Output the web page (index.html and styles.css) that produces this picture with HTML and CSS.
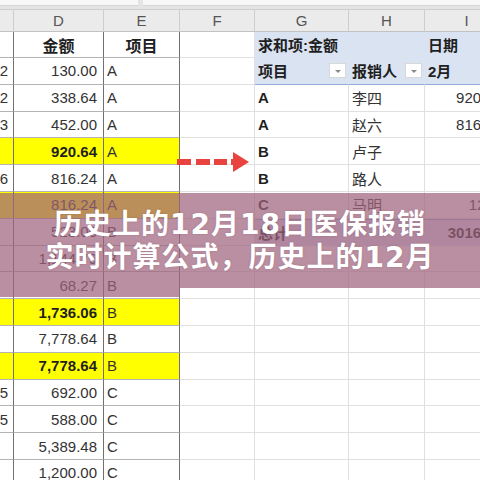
FILE: index.html
```html
<!DOCTYPE html>
<html lang="zh-CN">
<head>
<meta charset="utf-8">
<title>历史上的12月18日医保报销实时计算公式</title>
<link rel="stylesheet" href="styles.css">
</head>
<body>
<div class="sheet">
  <div class="topbar"><div class="namebox"></div><div class="fbar"></div></div>
  <div class="row hdr">
    <div class="c"></div><div class="c">D</div><div class="c">E</div><div class="c">F</div><div class="c">G</div><div class="c">H</div><div class="c">I</div>
  </div>
  <div class="row r1">
    <div class="c k"></div><div class="c t ctr b">金额</div><div class="c t ctr b">项目</div><div class="c"></div>
    <div class="c pv b">求和项:金额</div><div class="c pv"></div><div class="c pv b">日期</div>
  </div>
  <div class="row">
    <div class="c k">2</div><div class="c t num">130.00</div><div class="c t">A</div><div class="c"></div>
    <div class="c pv pvb b dd"><span>项目</span><span class="btn"></span></div><div class="c pv pvb b dd"><span>报销人</span><span class="btn"></span></div><div class="c pv pvb b">2月</div>
  </div>
  <div class="row">
    <div class="c k">2</div><div class="c t num">338.64</div><div class="c t">A</div><div class="c"></div>
    <div class="c b">A</div><div class="c">李四</div><div class="c num">920.64</div>
  </div>
  <div class="row">
    <div class="c k">3</div><div class="c t num">452.00</div><div class="c t">A</div><div class="c"></div>
    <div class="c b">A</div><div class="c">赵六</div><div class="c num">816.24</div>
  </div>
  <div class="row">
    <div class="c k y"></div><div class="c t num y b">920.64</div><div class="c t y">A</div><div class="c"></div>
    <div class="c b">B</div><div class="c">卢子</div><div class="c num"></div>
  </div>
  <div class="row">
    <div class="c k">6</div><div class="c t num">816.24</div><div class="c t">A</div><div class="c"></div>
    <div class="c b">B</div><div class="c">路人</div><div class="c num"></div>
  </div>
  <div class="row">
    <div class="c k y"></div><div class="c t num y">816.24</div><div class="c t y">A</div><div class="c"></div>
    <div class="c b">C</div><div class="c">马明</div><div class="c num">1200</div>
  </div>
  <div class="row">
    <div class="c k"></div><div class="c t num">523.00</div><div class="c t">B</div><div class="c"></div>
    <div class="c pv pvt b">总计</div><div class="c pv pvt"></div><div class="c pv pvt num b">3016.88</div>
  </div>
  <div class="row">
    <div class="c k"></div><div class="c t num">1,144.79</div><div class="c t">B</div><div class="c"></div>
    <div class="c"></div><div class="c"></div><div class="c"></div>
  </div>
  <div class="row">
    <div class="c k"></div><div class="c t num">68.27</div><div class="c t">B</div><div class="c"></div>
    <div class="c"></div><div class="c"></div><div class="c"></div>
  </div>
  <div class="row">
    <div class="c k y"></div><div class="c t num y b">1,736.06</div><div class="c t y">B</div><div class="c"></div>
    <div class="c"></div><div class="c"></div><div class="c"></div>
  </div>
  <div class="row">
    <div class="c k"></div><div class="c t num">7,778.64</div><div class="c t">B</div><div class="c"></div>
    <div class="c"></div><div class="c"></div><div class="c"></div>
  </div>
  <div class="row">
    <div class="c k y"></div><div class="c t num y b">7,778.64</div><div class="c t y">B</div><div class="c"></div>
    <div class="c"></div><div class="c"></div><div class="c"></div>
  </div>
  <div class="row">
    <div class="c k">5</div><div class="c t num">692.00</div><div class="c t">C</div><div class="c"></div>
    <div class="c"></div><div class="c"></div><div class="c"></div>
  </div>
  <div class="row">
    <div class="c k">5</div><div class="c t num">588.00</div><div class="c t">C</div><div class="c"></div>
    <div class="c"></div><div class="c"></div><div class="c"></div>
  </div>
  <div class="row">
    <div class="c k"></div><div class="c t num">5,389.48</div><div class="c t">C</div><div class="c"></div>
    <div class="c"></div><div class="c"></div><div class="c"></div>
  </div>
  <div class="row">
    <div class="c k"></div><div class="c t num">1,200.00</div><div class="c t">C</div><div class="c"></div>
    <div class="c"></div><div class="c"></div><div class="c"></div>
  </div>

  <svg class="arrow" width="76" height="22" viewBox="0 0 76 22">
    <rect x="0" y="8" width="14" height="6" fill="#e8433f"/>
    <rect x="19" y="8" width="14" height="6" fill="#e8433f"/>
    <rect x="37" y="8" width="13" height="6" fill="#e8433f"/>
    <rect x="54" y="8" width="6" height="6" fill="#e8433f"/>
    <polygon points="56,1 72,11 56,21" fill="#e8433f"/>
  </svg>

  <div class="banner">
    <span class="line">历史上的12月18日医保报销</span>
    <span class="line">实时计算公式，历史上的12月</span>
  </div>
</div>
</body>
</html>
```

FILE: styles.css
```css
html, body {
  margin: 0;
  padding: 0;
  background: #ffffff;
}
body {
  width: 480px;
  height: 480px;
  overflow: hidden;
  font-family: "Liberation Sans", "Noto Sans CJK SC", sans-serif;
}
.sheet {
  position: relative;
  width: 480px;
  height: 480px;
  overflow: hidden;
}
.topbar {
  height: 10px;
  box-sizing: border-box;
  display: flex;
  gap: 5px;
  background: #e4e4e4;
  border-bottom: 1px solid #cfcfcf;
}
.namebox {
  width: 138px;
  height: 5px;
  background: #f7f7f7;
  border-bottom: 1px solid #d6d6d6;
}
.fbar {
  flex: 1;
  height: 5px;
  background: #f7f7f7;
  border-bottom: 1px solid #d6d6d6;
}
.row {
  display: grid;
  grid-template-columns: 14px 90px 76px 75px 94px 76px 84px;
  width: 509px;
  height: 26.8px;
}
.c {
  box-sizing: border-box;
  border-right: 1px solid #e0e0e0;
  border-bottom: 1px solid #e0e0e0;
  display: flex;
  align-items: center;
  padding: 0 3px;
  font-size: 15px;
  color: #333333;
  white-space: nowrap;
  overflow: hidden;
}
.hdr {
  height: 22px;
  background: #ebebeb;
}
.hdr .c {
  justify-content: center;
  color: #555555;
  font-size: 15px;
  border-right-color: #cdcdcd;
  border-bottom-color: #c2c2c2;
}
.r1 {
  height: 26px;
}
.k {
  justify-content: flex-end;
  padding: 0 5px 0 0;
  border-right-color: #707070;
  border-bottom-color: #b4b4b4;
}
.t {
  border-right-color: #707070;
  border-bottom-color: #b4b4b4;
}
.num {
  justify-content: flex-end;
  padding-right: 6px;
}
.ctr {
  justify-content: center;
  font-family: "Noto Sans CJK SC", sans-serif;
  font-size: 16px;
}
.b {
  font-weight: bold;
  color: #1f1f1f;
}
.y {
  background: #ffff00;
}
.pv {
  background: #dae3f2;
  border-right-color: #dae3f2;
  border-bottom-color: #dae3f2;
}
.pvb {
  border-bottom-color: #93acd9;
}
.pvt {
  border-top: 1px solid #93acd9;
}
.dd {
  justify-content: space-between;
  padding-right: 2px;
}
.btn {
  position: relative;
  width: 17px;
  height: 15px;
  box-sizing: border-box;
  background: #ffffff;
  border: 1px solid #d8d8d8;
}
.btn::after {
  content: "";
  position: absolute;
  left: 5px;
  top: 6px;
  border-left: 3px solid transparent;
  border-right: 3px solid transparent;
  border-top: 3px solid #8a8a8a;
}
.arrow {
  position: absolute;
  left: 177px;
  top: 151px;
}
.banner {
  position: absolute;
  left: 0;
  top: 193px;
  width: 480px;
  height: 95px;
  background: rgba(160, 100, 125, 0.72);
  display: flex;
  flex-direction: column;
  align-items: center;
  justify-content: center;
  color: #ffffff;
  font-family: "DejaVu Sans", "Noto Sans CJK SC", sans-serif;
  font-weight: bold;
  font-size: 28px;
  line-height: 33px;
  letter-spacing: 1px;
  text-shadow: 0 0 2px rgba(80, 40, 60, 0.25);
}
.banner::after {
  content: "";
  position: absolute;
  left: 0;
  top: 95px;
  width: 180px;
  height: 9px;
  background: rgba(160, 100, 125, 0.72);
}
.line {
  display: block;
  white-space: nowrap;
}
```
